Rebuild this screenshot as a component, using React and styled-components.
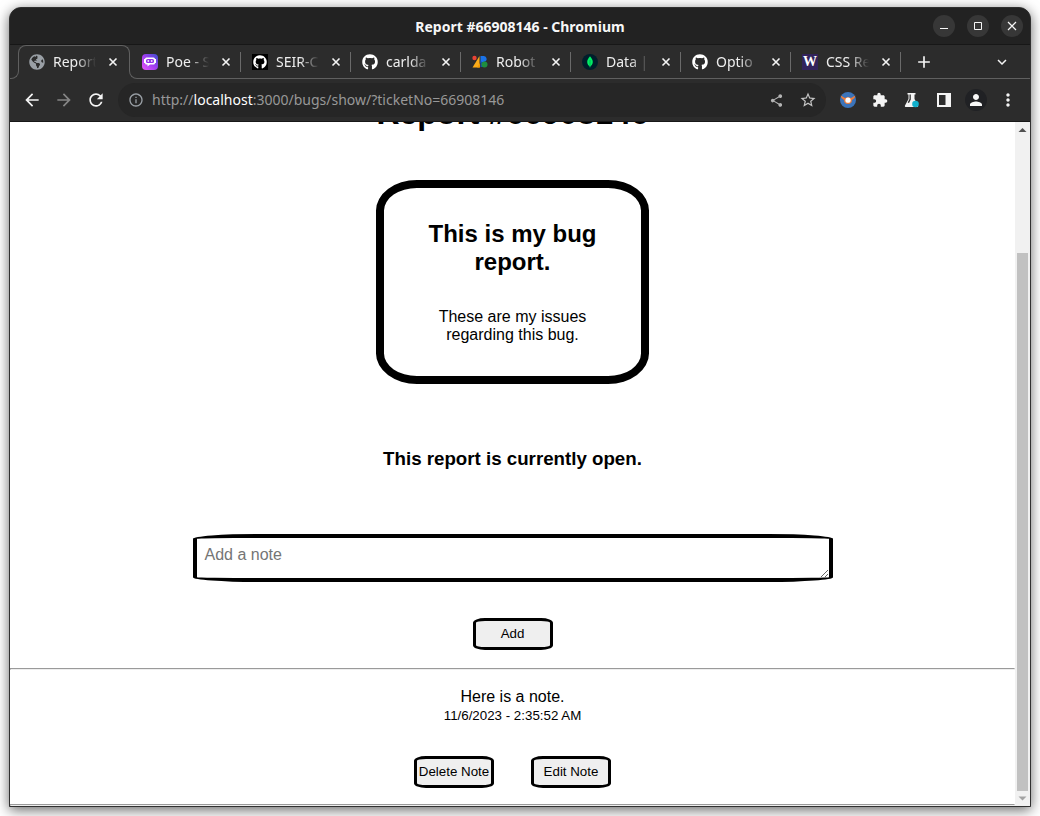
import React from "react";
import styled, { createGlobalStyle, css } from "styled-components";
import {
  MdAdd, MdArrowBack, MdArrowForward, MdClose, MdExpandMore, MdExtension,
  MdInfoOutline, MdMoreVert, MdPerson, MdRefresh, MdShare, MdStarBorder,
} from "react-icons/md";
import { FaGithub, FaGlobeAmericas } from "react-icons/fa";

const GlobalStyle = createGlobalStyle`
  *, *::before, *::after { box-sizing: border-box; }
  body { margin: 0; background: #fff; }
  button, textarea { font-family: "Liberation Sans", Arial, sans-serif; }
  svg { display: block; flex: none; }
`;

const uiFont = css`font-family: "Noto Sans", "Open Sans", sans-serif;`;

const Desktop = styled.div`
  height: 100vh;
  min-height: 400px;
  padding: 7px 9px 9px;
  overflow: hidden;
`;

const Window = styled.div`
  height: 100%;
  display: flex;
  flex-direction: column;
  overflow: hidden;
  border: 1px solid #303030;
  border-radius: 12px 12px 0 0;
  background: #2c2c2c;
  box-shadow: 0 3px 13px rgba(0, 0, 0, 0.6);
`;

const TitleBar = styled.header`
  ${uiFont}
  flex: none;
  height: 37px;
  display: grid;
  grid-template-columns: 1fr auto 1fr;
  align-items: center;
  padding: 0 7px;
  background: #222;
  border-bottom: 1px solid #171717;
  color: #f7f7f7;
  font-size: 14px;
  font-weight: 700;
`;

const WindowTitle = styled.span`
  grid-column: 2;
`;

const WindowControls = styled.div`
  justify-self: end;
  display: flex;
  gap: 12px;
`;

const RoundButton = styled.button`
  width: 22px;
  height: 22px;
  padding: 0;
  display: grid;
  place-items: center;
  border: 0;
  border-radius: 50%;
  background: #373737;
  color: #f7f7f7;
`;

const TabStrip = styled.nav`
  ${uiFont}
  flex: none;
  height: 34px;
  display: flex;
  align-items: flex-start;
  color: #eee;
  font-size: 14px;
`;

const Flare = styled.span`
  flex: none;
  align-self: flex-end;
  width: 9px;
  height: 8px;
  border-bottom: 1px solid #606060;
  ${({ $side }) =>
    $side === "left"
      ? css`border-right: 1px solid #606060; border-bottom-right-radius: 8px;`
      : css`border-left: 1px solid #606060; border-bottom-left-radius: 8px;`}
`;

const ActiveTabFrame = styled.div`
  flex: none;
  width: 112px;
  height: 26px;
  margin: 0 -1px;
  border: 1px solid #606060;
  border-bottom: 0;
  border-radius: 8px 8px 0 0;
`;

const OtherTabs = styled.div`
  flex: 1;
  min-width: 0;
  height: 34px;
  display: flex;
  align-items: center;
  border-bottom: 1px solid #606060;
`;

const TabList = styled.div`
  display: flex;
  margin-left: -7px;
`;

const Tab = styled.div`
  display: flex;
  align-items: center;
  flex: 0 0 110px;
  height: ${({ $active }) => ($active ? "32px" : "20px")};
  padding-left: ${({ $active }) => ($active ? "10px" : "11px")};
  border-right: ${({ $active }) => ($active ? "0" : "1px solid #6a6a6a")};
`;

const TabLink = styled.a`
  display: flex;
  align-items: center;
  gap: 8px;
  color: inherit;
  text-decoration: none;
`;

const TabLabel = styled.span`
  width: 43px;
  overflow: hidden;
  white-space: nowrap;
  line-height: 20px;
  mask-image: linear-gradient(to right, #000 55%, transparent);
`;

const PlainButton = styled.button`
  width: ${({ $size = 16 }) => $size}px;
  height: ${({ $size = 16 }) => $size}px;
  padding: 0;
  flex: none;
  display: grid;
  place-items: center;
  border: 0;
  background: transparent;
  color: ${({ $tone = "#f4f4f4" }) => $tone};
`;

const CloseSlot = styled.span`
  margin-left: 9px;
`;

const NewTabSlot = styled.span`
  margin-left: 13px;
`;

const TabSearchSlot = styled.span`
  margin: 0 18px 0 auto;
`;

const WordMark = styled.span`
  width: 16px;
  height: 16px;
  display: grid;
  place-items: center;
  background: #32235c;
  color: #fff;
  font: 900 14px/16px "Liberation Serif", serif;
`;

const Toolbar = styled.div`
  flex: none;
  height: 43px;
  display: flex;
  align-items: center;
  padding: 0 12px;
  background: #2c2c2c;
  border-bottom: 1px solid #171717;
`;

const ButtonRow = styled.div`
  display: flex;
  align-items: center;
  gap: 12px;
`;

const AddressBar = styled.div`
  ${uiFont}
  flex: 1;
  min-width: 0;
  height: 34px;
  margin: 0 12px;
  padding: 0 8px;
  display: flex;
  align-items: center;
  gap: 6px;
  border-radius: 17px;
  background: #262626;
  color: #989898;
  font-size: 14px;
`;

const Address = styled.div`
  flex: 1;
  min-width: 0;
  overflow: hidden;
  white-space: nowrap;
  line-height: 20px;
`;

const Host = styled.span`
  color: #fff;
`;

const Avatar = styled(RoundButton)`
  background: #202124;
  margin: 0 -1px;
`;

const Viewport = styled.div`
  flex: 1;
  min-height: 0;
  display: flex;
  background: #fff;
`;

const ScrollArea = styled.div`
  flex: 1;
  min-width: 0;
  overflow: hidden;
`;

const Page = styled.main`
  display: flex;
  flex-direction: column;
  align-items: center;
  margin-top: -27px;
  color: #000;
  font: 16px/18px "Liberation Sans", Arial, sans-serif;
  text-align: center;
`;

const PageTitle = styled.h1`
  margin: 0 0 48px;
  font-size: 32px;
  line-height: 37px;
`;

const ReportCard = styled.section`
  width: 273px;
  padding: 32px;
  display: flex;
  flex-direction: column;
  gap: 32px;
  border: 8px solid #000;
  border-radius: 15%;
`;

const ReportTitle = styled.h2`
  margin: 0;
  font-size: 24px;
  line-height: 28px;
`;

const Text = styled.p`
  margin: 0;
`;

const Status = styled.h3`
  margin: 64px 0;
  line-height: 22px;
`;

const NoteForm = styled.form`
  width: 640px;
  max-width: 100%;
  margin-bottom: 2px;
  display: flex;
  flex-direction: column;
  align-items: center;
  gap: 36px;
`;

const NoteInput = styled.textarea`
  width: 100%;
  height: 48px;
  padding: 8px;
  border: 4px solid #000;
  border-radius: 10%;
  background: #fff;
  font-size: 16px;
  line-height: 18px;
  &::placeholder { color: #757575; }
`;

const ActionButton = styled.button`
  width: 80px;
  height: 32px;
  padding: 0 0 2px;
  border: 3px solid #000;
  border-radius: 15%;
  background: #efefef;
  color: #000;
  white-space: nowrap;
`;

const Divider = styled.hr`
  width: 100%;
  margin: 16px 0;
`;

const Note = styled.article`
  padding-top: 2px;
  display: flex;
  flex-direction: column;
  align-items: center;
`;

const Time = styled.time`
  display: block;
  margin: 2px 0 32px;
  font-size: smaller;
  line-height: 16px;
`;

const NoteActions = styled.div`
  display: flex;
  gap: 37px;
`;

const Scrollbar = styled.div`
  flex: none;
  width: 15px;
  padding: 0 2px;
  display: flex;
  flex-direction: column;
  align-items: center;
  background: #f1f1f1;
`;

const ScrollTrack = styled.div`
  flex: 116;
`;

const ScrollThumb = styled.div`
  flex: 538;
  width: 11px;
  background: #c1c1c1;
`;

const PoeIcon = () => (
  <svg width="16" height="16" viewBox="0 0 16 16">
    <defs>
      <linearGradient id="poe" x1="0" y1="1" x2="1" y2="0">
        <stop offset="0" stopColor="#e855f8" />
        <stop offset=".5" stopColor="#a03df0" />
        <stop offset="1" stopColor="#3b4fd0" />
      </linearGradient>
    </defs>
    <rect width="16" height="16" rx="4" fill="url(#poe)" />
    <path d="M4.500 3.500h7a1.500 1.500 0 0 1 1.500 1.500h1v4h-1a1.500 1.500 0 0 1-1.500 1.500H8l-2.500 2v-2h-1A1.500 1.500 0 0 1 3 9H2V5h1a1.500 1.500 0 0 1 1.500-1.500z" fill="#fff" />
    <rect x="4" y="5" width="8" height="4" rx="1.500" fill="#9333ea" />
    <path d="M6.300 6.200v1.600M9.700 6.200v1.600" stroke="#fff" strokeWidth="1.500" />
  </svg>
);

const GithubBoxIcon = () => (
  <svg width="16" height="16" viewBox="0 0 16 16">
    <rect width="16" height="16" fill="#000" />
    <FaGithub x="1" y="1" width="14" height="14" color="#fff" />
  </svg>
);

const RobotIcon = () => (
  <svg width="16" height="16" viewBox="0 0 16 16">
    <circle cx="2.500" cy="4" r="2.200" fill="#ea4335" />
    <path d="M7.500 2v11.500H.5z" fill="#fbab19" />
    <path d="M5 13.500 8 9v4.500z" fill="#f29900" />
    <path d="M8.500 2h3.200a3 3 0 0 1 2 5.200L8.500 9z" fill="#1a73e8" />
    <path d="M8.500 6.500 14 13H8.500z" fill="#174ea6" />
    <circle cx="12.500" cy="10.500" r="3" fill="#1e8e3e" />
  </svg>
);

const LeafIcon = () => (
  <svg width="16" height="16" viewBox="0 0 16 16">
    <circle cx="8" cy="8" r="8" fill="#001e2b" />
    <path d="M8 2.200C9.800 4.300 10.800 6 10.800 8c0 2-1 3.300-2.400 4.300L8 14l-.4-1.700C6.200 11.300 5.200 10 5.200 8c0-2 1-3.700 2.800-5.800z" fill="#00ed64" />
    <path d="M8 6v7" stroke="#00a04a" strokeWidth=".7" />
  </svg>
);

const CompassIcon = () => (
  <svg width="16" height="16" viewBox="0 0 16 16">
    <circle cx="8" cy="8" r="8" fill="#3b74bb" />
    <path d="M.6 3.600 5 6l3-1 3 1 4.400-2.400L14.500 6 12 8a4 4 0 0 1-8 0L1.500 6z" fill="#ee7d3b" />
    <circle cx="8" cy="8.200" r="2.600" fill="#fff" />
  </svg>
);

const FlaskIcon = () => (
  <svg width="16" height="16" viewBox="0 0 16 16">
    <path d="M3.500 1h8v1.500h-1V7l3.500 6.500c.4.800 0 1.500-.9 1.500H1.900c-.9 0-1.300-.7-.9-1.500L4.500 7V2.500h-1z" fill="#f4f4f4" />
    <path d="M5.500 2.500h1.300v5L5 11l-1.300-.5L5.500 7z" fill="#2c2c2c" />
    <circle cx="11.500" cy="12" r="3.300" fill="#12b0cc" />
  </svg>
);

const SidePanelIcon = () => (
  <svg width="16" height="16" viewBox="0 0 16 16">
    <path d="M1 1h14v14H1zM3 3v10h6.500V3z" fill="#f4f4f4" fillRule="evenodd" />
  </svg>
);

const Glyph = ({ d, width = 1 }) => (
  <svg width="10" height="10" viewBox="0 0 10 10">
    <path d={d} fill="none" stroke="currentColor" strokeWidth={width} />
  </svg>
);

const Arrow = ({ d, color }) => (
  <svg width="15" height="15" viewBox="0 0 15 15">
    <path d={d} fill={color} />
  </svg>
);

const tabs = [
  { label: "Poe - S", icon: <PoeIcon /> },
  { label: "SEIR-C", icon: <GithubBoxIcon /> },
  { label: "carlda", icon: <FaGithub size={16} color="#fff" /> },
  { label: "Robot", icon: <RobotIcon /> },
  { label: "Data |", icon: <LeafIcon /> },
  { label: "Optio", icon: <FaGithub size={16} color="#fff" /> },
  { label: "CSS Re", icon: <WordMark>W</WordMark> },
];

function BrowserTab({ icon, label, active }) {
  return (
    <Tab $active={active}>
      <TabLink href="#">
        {icon}
        <TabLabel>{label}</TabLabel>
      </TabLink>
      <CloseSlot>
        <PlainButton aria-label={`Close ${label}`}>
          <Glyph d="M1.500 1.500l7 7M8.500 1.500l-7 7" width={1.6} />
        </PlainButton>
      </CloseSlot>
    </Tab>
  );
}

export default function App() {
  return (
    <>
      <GlobalStyle />
      <Desktop>
        <Window>
          <TitleBar>
            <WindowTitle>Report #66908146 - Chromium</WindowTitle>
            <WindowControls>
              <RoundButton aria-label="Minimize"><Glyph d="M1 7.500h8" /></RoundButton>
              <RoundButton aria-label="Maximize"><Glyph d="M1.500 1.500h7v7h-7z" /></RoundButton>
              <RoundButton aria-label="Close"><Glyph d="M1 1l8 8M9 1l-8 8" width={1.2} /></RoundButton>
            </WindowControls>
          </TitleBar>
          <TabStrip aria-label="Tabs">
            <Flare $side="left" />
            <ActiveTabFrame>
              <BrowserTab active label="Report" icon={<FaGlobeAmericas size={16} color="#9aa0a6" />} />
            </ActiveTabFrame>
            <Flare $side="right" />
            <OtherTabs>
              <TabList>
                {tabs.map((tab) => <BrowserTab key={tab.label} {...tab} />)}
              </TabList>
              <NewTabSlot>
                <PlainButton $size={20} aria-label="New tab"><MdAdd size={20} /></PlainButton>
              </NewTabSlot>
              <TabSearchSlot>
                <PlainButton $size={20} aria-label="Search tabs"><MdExpandMore size={18} /></PlainButton>
              </TabSearchSlot>
            </OtherTabs>
          </TabStrip>
          <Toolbar>
            <ButtonRow>
              <PlainButton $size={20} aria-label="Back"><MdArrowBack size={20} /></PlainButton>
              <PlainButton $size={20} $tone="#858585" aria-label="Forward"><MdArrowForward size={20} /></PlainButton>
              <PlainButton $size={20} aria-label="Reload"><MdRefresh size={20} /></PlainButton>
            </ButtonRow>
            <AddressBar>
              <PlainButton $size={20} $tone="#9aa0a6" aria-label="Site information"><MdInfoOutline size={16} /></PlainButton>
              <Address role="textbox" aria-label="Address">
                http://<Host>localhost</Host>:3000/bugs/show/?ticketNo=66908146
              </Address>
              <ButtonRow>
                <PlainButton $size={20} $tone="#b4b4b4" aria-label="Share"><MdShare size={15} /></PlainButton>
                <PlainButton $size={20} $tone="#c4c4c4" aria-label="Bookmark"><MdStarBorder size={18} /></PlainButton>
              </ButtonRow>
            </AddressBar>
            <ButtonRow>
              <PlainButton $size={20} aria-label="Compass extension"><CompassIcon /></PlainButton>
              <PlainButton $size={20} aria-label="Extensions"><MdExtension size={16} /></PlainButton>
              <PlainButton $size={20} aria-label="Experiments"><FlaskIcon /></PlainButton>
              <PlainButton $size={20} aria-label="Side panel"><SidePanelIcon /></PlainButton>
              <Avatar aria-label="Profile"><MdPerson size={18} /></Avatar>
              <PlainButton $size={20} aria-label="Menu"><MdMoreVert size={20} /></PlainButton>
            </ButtonRow>
          </Toolbar>
          <Viewport>
            <ScrollArea>
              <Page>
                <PageTitle>Report #66908146</PageTitle>
                <ReportCard>
                  <ReportTitle>This is my bug report.</ReportTitle>
                  <Text>These are my issues regarding this bug.</Text>
                </ReportCard>
                <Status>This report is currently open.</Status>
                <NoteForm onSubmit={(event) => event.preventDefault()}>
                  <NoteInput aria-label="Add a note" placeholder="Add a note" />
                  <ActionButton type="submit">Add</ActionButton>
                </NoteForm>
                <Divider />
                <Note>
                  <Text>Here is a note.</Text>
                  <Time dateTime="2023-11-06T02:35:52">11/6/2023 - 2:35:52 AM</Time>
                  <NoteActions>
                    <ActionButton type="button">Delete Note</ActionButton>
                    <ActionButton type="button">Edit Note</ActionButton>
                  </NoteActions>
                </Note>
                <Divider />
              </Page>
            </ScrollArea>
            <Scrollbar aria-hidden="true">
              <Arrow d="M7.500 6 11.500 10h-8z" color="#505050" />
              <ScrollTrack />
              <ScrollThumb />
              <Arrow d="M7.500 9.500l4-4h-8z" color="#a3a3a3" />
            </Scrollbar>
          </Viewport>
        </Window>
      </Desktop>
    </>
  );
}
